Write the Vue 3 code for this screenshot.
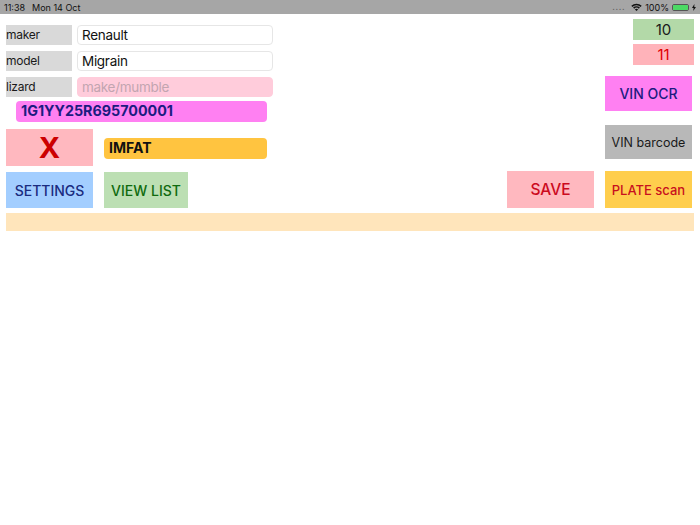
<script setup>
const fields = [
  { label: 'maker', value: 'Renault', tone: '' },
  { label: 'model', value: 'Migrain', tone: '' },
  { label: 'lizard', value: 'make/mumble', tone: 'empty' },
]
</script>

<template>
  <div class="screen">
    <header class="status">
      <div class="status-left"><span>11:38</span><span>Mon 14 Oct</span></div>
      <div class="status-right">
        <span class="signal">....</span>
        <svg class="wifi" width="11" height="8" viewBox="0 0 11 8">
          <path d="M0.3 2.8A7.4 7.4 0 0 1 10.7 2.8L9.6 3.9A5.8 5.8 0 0 0 1.4 3.9Z" fill="#111" />
          <path d="M2.1 4.6A4.9 4.9 0 0 1 8.9 4.6L7.8 5.7A3.3 3.3 0 0 0 3.2 5.7Z" fill="#111" />
          <path d="M3.9 6.4A2.3 2.3 0 0 1 7.1 6.4L5.5 8Z" fill="#111" />
        </svg>
        <span>100%</span>
        <span class="battery"><span class="battery-fill"></span></span>
        <svg class="bolt" width="4" height="7" viewBox="0 0 4 7"><path d="M2.4 0L0 3.9H1.6L1.2 7L4 2.9H2.3Z" fill="#111" /></svg>
      </div>
    </header>

    <main class="content">
      <div class="top">
        <div class="left">
          <div v-for="f in fields" :key="f.label" class="field">
            <div class="label">{{ f.label }}</div>
            <div class="input" :class="f.tone">{{ f.value }}</div>
          </div>
          <div class="vin">1G1YY25R695700001</div>
          <div class="error-row">
            <button class="btn close">X</button>
            <div class="imfat">IMFAT</div>
          </div>
        </div>
        <div class="right">
          <div class="count green">10</div>
          <div class="count red">11</div>
          <button class="btn ocr">VIN OCR</button>
          <button class="btn barcode">VIN barcode</button>
        </div>
      </div>

      <div class="actions">
        <button class="btn settings">SETTINGS</button>
        <button class="btn list">VIEW LIST</button>
        <button class="btn save">SAVE</button>
        <button class="btn plate">PLATE scan</button>
      </div>
      <div class="message"></div>
    </main>
  </div>
</template>

<style>
html, body { margin: 0; background: #fff; }
</style>

<style scoped>
.screen {
  width: 700px;
  height: 525px;
  overflow: hidden;
  background: #fff;
  font-family: Inter, "Liberation Sans", sans-serif;
  color: #1a1a1a;
}
.status {
  height: 14px;
  background: #a6a6a6;
  display: flex;
  justify-content: space-between;
  align-items: center;
  padding: 0 4px;
  font-size: 9px;
  color: #111;
  box-sizing: border-box;
}
.status-left { display: flex; gap: 7px; }
.status-right { display: flex; align-items: center; gap: 3px; }
.signal { color: #666; letter-spacing: 0.6px; margin-right: 3px; transform: translateY(-1px); }
.battery {
  width: 17px;
  height: 7px;
  border: 1px solid #555;
  border-radius: 2px;
  display: block;
  box-sizing: border-box;
  overflow: hidden;
}
.battery-fill { display: block; width: 100%; height: 100%; background: #4cd964; }

.content { padding: 5px 6px 0; }
.top { display: flex; justify-content: space-between; height: 152px; }
.left { width: 267px; padding-top: 6px; }
.field { display: flex; gap: 5px; margin-bottom: 6px; height: 20px; }
.label {
  width: 66px;
  background: #d9d9d9;
  font-size: 12px;
  letter-spacing: -0.25px;
  line-height: 20px;
}
.input {
  width: 196px;
  box-sizing: border-box;
  border: 1px solid #e6e6e6;
  border-radius: 4px;
  padding-left: 4px;
  font-size: 13.5px;
  letter-spacing: -0.3px;
  line-height: 18px;
  color: #111;
}
.input.empty {
  background: #ffccdb;
  border-color: #ffccdb;
  color: #c2a5b0;
}
.vin {
  margin: -2px 0 0 10px;
  width: 251px;
  height: 21px;
  background: #ff80f2;
  border-radius: 4px;
  padding-left: 5px;
  box-sizing: border-box;
  font-size: 14.3px;
  font-weight: 700;
  line-height: 20px;
  color: #1c1c80;
}
.error-row { display: flex; align-items: flex-start; margin-top: 7px; gap: 11px; }
.imfat {
  margin-top: 9px;
  width: 163px;
  height: 21px;
  background: #ffc440;
  border-radius: 4px;
  padding-left: 5px;
  box-sizing: border-box;
  font-size: 14px;
  font-weight: 700;
  line-height: 20px;
  color: #111;
}
.btn {
  display: block;
  border: 0;
  padding: 0;
  margin: 0;
  font-family: inherit;
  text-align: center;
}
.close {
  width: 87px;
  height: 37px;
  background: #ffb8bf;
  color: #cc0000;
  font-size: 29px;
  font-weight: 700;
  line-height: 37px;
}
.right {
  width: 89px;
  display: flex;
  flex-direction: column;
  align-items: flex-end;
}
.count {
  width: 61px;
  height: 21px;
  font-size: 15px;
  line-height: 21px;
  text-align: center;
}
.count.green { background: #b3d9a8; color: #1a1a1a; }
.count.red { background: #ffb3ba; color: #e00000; margin-top: 4px; }
.ocr {
  width: 87px;
  height: 35px;
  margin: 11px 2px 0 0;
  background: #ff80f2;
  color: #1c1c80;
  font-size: 14px;
  font-weight: 500;
}
.barcode {
  width: 87px;
  height: 34px;
  margin: 14px 2px 0 0;
  background: #b8b8b8;
  color: #1a1a1a;
  font-size: 12.5px;
}
.actions { display: flex; align-items: flex-start; height: 36px; margin-top: 1px; }
.settings {
  width: 87px;
  height: 36px;
  background: #a3ceff;
  color: #1a2c80;
  font-size: 14px;
  font-weight: 500;
}
.list {
  width: 84px;
  height: 36px;
  margin-left: 11px;
  background: #bcdfb3;
  color: #0f6b0f;
  font-size: 14px;
  font-weight: 500;
}
.save {
  width: 87px;
  height: 37px;
  margin: -1px 0 0 319px;
  background: #ffb8bf;
  color: #cc0a1e;
  font-size: 15.5px;
  font-weight: 500;
}
.plate {
  width: 87px;
  height: 37px;
  margin: -1px 0 0 11px;
  background: #ffce4d;
  color: #c8101e;
  font-size: 13px;
  font-weight: 500;
}
.message { height: 18px; margin-top: 5px; background: #ffe5bb; }
</style>
